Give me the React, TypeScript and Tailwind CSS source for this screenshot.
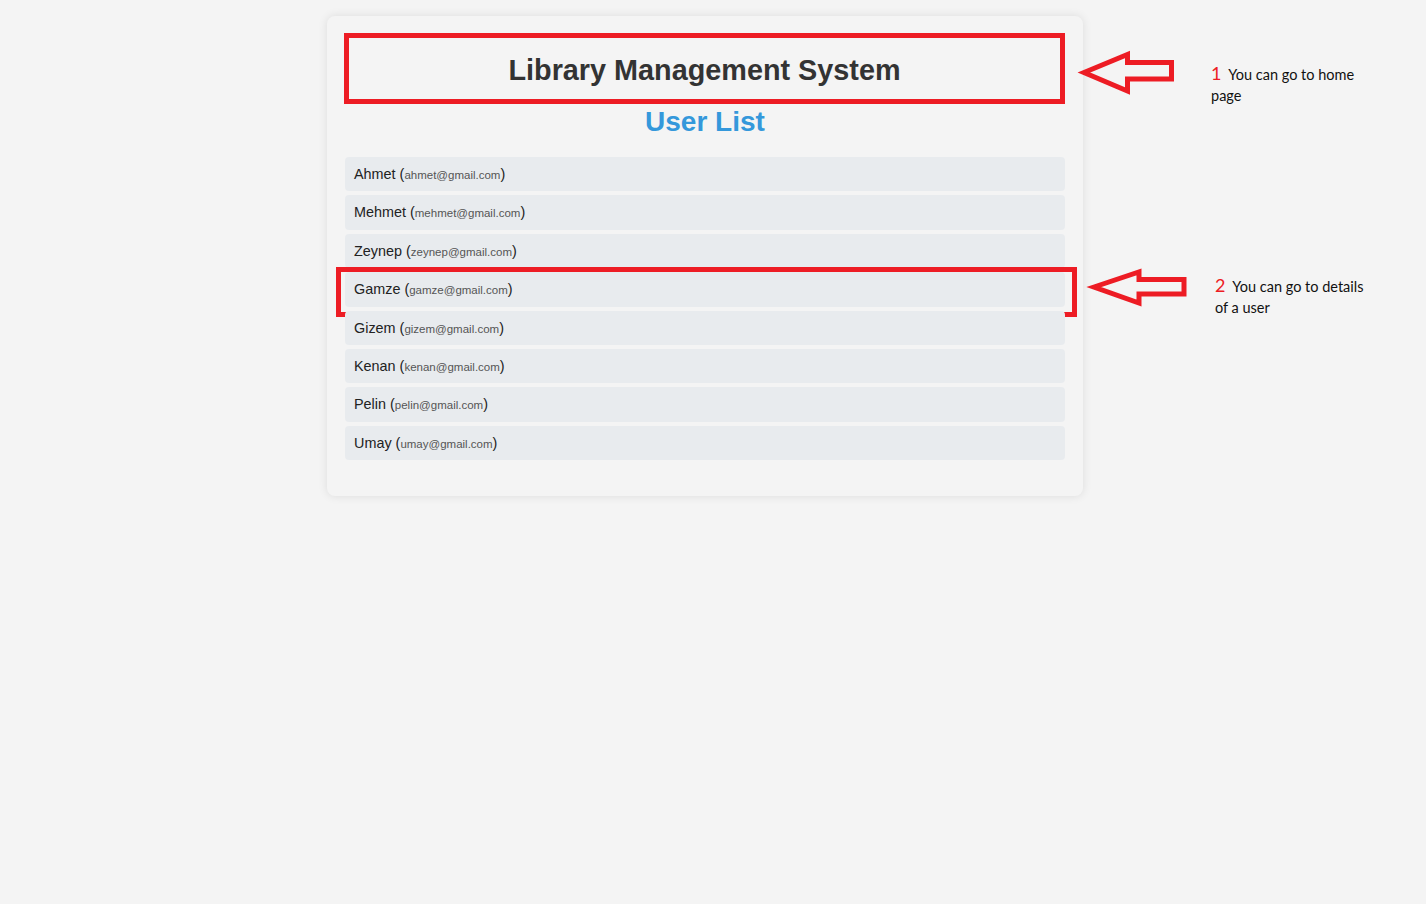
import React from "react";

const users = [
  { name: "Ahmet", email: "ahmet@gmail.com" },
  { name: "Mehmet", email: "mehmet@gmail.com" },
  { name: "Zeynep", email: "zeynep@gmail.com" },
  { name: "Gamze", email: "gamze@gmail.com" },
  { name: "Gizem", email: "gizem@gmail.com" },
  { name: "Kenan", email: "kenan@gmail.com" },
  { name: "Pelin", email: "pelin@gmail.com" },
  { name: "Umay", email: "umay@gmail.com" },
];

function Arrow({ points }: { points: string }) {
  return (
    <polygon
      points={points}
      fill="none"
      stroke="#ed1c24"
      strokeWidth={5}
      strokeLinejoin="miter"
    />
  );
}

function Note({ num, text }: { num: string; text: string }) {
  return (
    <div
      className="w-[152px] text-[14.5px] leading-[21px] text-[#111]"
      style={{ fontFamily: "Lato, 'Open Sans', sans-serif" }}
    >
      <span className="text-[18px] leading-none text-[#ed1c24]">{num}</span>
      {"\u00a0 "}
      {text}
    </div>
  );
}

export default function App() {
  return (
    <div
      className="relative min-h-screen bg-[#f4f4f4] pt-[16px]"
      style={{ fontFamily: '"Liberation Sans", Arial, sans-serif' }}
    >
      <div className="ml-[327px] w-[756px] rounded-lg bg-[#f4f4f4] px-[18px] pt-[17px] pb-[36px] shadow-[0_0_10px_rgba(0,0,0,0.1)]">
        <header className="-ml-px border-[5px] border-[#ed1c24] pt-[15px] pb-[11px] text-center">
          <h1 className="text-[28.8px] font-bold leading-[35px] text-[#333]">
            Library Management System
          </h1>
        </header>
        <h2 className="mt-[2px] text-center text-[28px] font-bold leading-[32px] text-[#3498db]">
          User List
        </h2>
        <ul className="mt-[19px] flex flex-col gap-[4px]">
          {users.map((u) => (
            <li
              key={u.name}
              className="relative rounded-[4px] bg-[#e8ebee] py-[9px] pl-[9px] text-[14.4px] leading-[16.4px] text-[#222]"
            >
              {u.name} (
              <span className="text-[11.5px] leading-none text-[#555]">{u.email}</span>)
              {u.name === "Gamze" && (
                <span className="pointer-events-none absolute -top-[5px] -bottom-[10px] -left-[9px] -right-[12px] border-[5px] border-[#ed1c24]" />
              )}
            </li>
          ))}
        </ul>
      </div>

      <svg
        className="pointer-events-none absolute left-0 top-0"
        width={1426}
        height={904}
      >
        <Arrow points="1084,72.5 1127.5,54.5 1127.5,62.5 1171.5,62.5 1171.5,79 1127.5,79 1127.5,91" />
        <Arrow points="1094,287 1139,272 1139,279.5 1184,279.5 1184,294 1139,294 1139,303" />
      </svg>

      <div className="absolute left-[1211px] top-[64px]">
        <Note num="1" text="You can go to home page" />
      </div>
      <div className="absolute left-[1215px] top-[276px]">
        <Note num="2" text="You can go to details of a user" />
      </div>
    </div>
  );
}
